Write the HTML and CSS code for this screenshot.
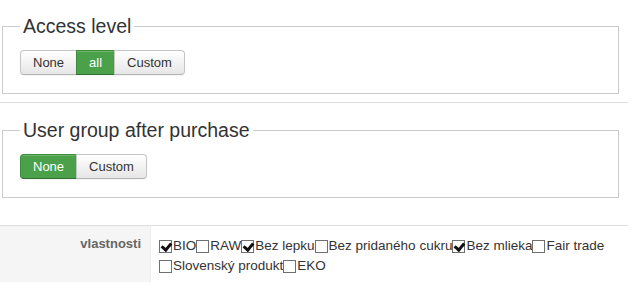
FILE: index.html
```html
<!DOCTYPE html>
<html lang="en">
  <head>
    <meta charset="UTF-8" />
    <title>Product options</title>
    <link rel="stylesheet" href="styles.css">
  </head>
  <body>
    <div class="page">
      <fieldset class="group">
        <legend>Access level</legend>
        <div class="btn-group">
          <button type="button" class="btn">None</button>
          <button type="button" class="btn btn-success">all</button>
          <button type="button" class="btn">Custom</button>
        </div>
      </fieldset>

      <hr class="sep" />

      <fieldset class="group">
        <legend>User group after purchase</legend>
        <div class="btn-group">
          <button type="button" class="btn btn-success">None</button>
          <button type="button" class="btn">Custom</button>
        </div>
      </fieldset>

      <table class="props">
        <tr>
          <th>vlastnosti</th>
          <td>
            <label class="opt"><input type="checkbox" checked />BIO</label><label class="opt"><input type="checkbox" />RAW</label><label class="opt"><input type="checkbox" checked />Bez lepku</label><label class="opt"><input type="checkbox" />Bez pridaného cukru</label><label class="opt"><input type="checkbox" checked />Bez mlieka</label><label class="opt"><input type="checkbox" />Fair trade</label>
            <label class="opt"><input type="checkbox" />Slovenský produkt</label><label class="opt"><input type="checkbox" />EKO</label>
          </td>
        </tr>
      </table>
    </div>
  </body>
</html>
```

FILE: styles.css
```css
body {
  margin: 0;
  font-family: Arial, "Liberation Sans", sans-serif;
  font-size: 13px;
  color: #333;
  background: #fff;
}
.page {
  width: 628px;
  padding-top: 14px;
}
.group {
  margin: 0 9px 0 2px;
  padding: 0 17px 18px;
  border: 1px solid #ccc;
}
.group legend {
  padding: 0 3px;
  font-size: 19.5px;
  line-height: 24px;
  color: #333;
}
.btn-group {
  display: flex;
  margin-top: 12px;
}
.btn {
  font-family: inherit;
  font-size: 13px;
  line-height: 15px;
  color: #333;
  padding: 4px 12px 4px;
  margin: 0 0 0 -1px;
  border: 1px solid #c5c5c5;
  border-bottom-color: #b3b3b3;
  border-radius: 0;
  background: linear-gradient(#ffffff, #e6e6e6);
  box-shadow: inset 0 1px 0 rgba(255, 255, 255, 0.2), 0 1px 2px rgba(0, 0, 0, 0.05);
  cursor: pointer;
}
.btn:first-child {
  margin-left: 0;
  border-radius: 4px 0 0 4px;
}
.btn:last-child {
  border-radius: 0 4px 4px 0;
}
.btn-success {
  color: #fff;
  background: #4aa14a;
  border-color: #3d8b3d;
  border-bottom-color: #2f6f2f;
}
.sep {
  margin: 8px 0 15px;
  border: 0;
  border-top: 1px solid #ddd;
}
.props {
  margin-top: 27px;
  width: 628px;
  border-collapse: collapse;
  border-top: 1px solid #ddd;
}
.props th {
  width: 133px;
  padding: 8px 9px 8px 8px;
  background: #f5f5f5;
  text-align: right;
  vertical-align: top;
  font-weight: bold;
  color: #666;
  line-height: 20px;
  border-right: 1px solid #eee;
}
.props td {
  padding: 10px 0 6px 8px;
  font-size: 13.5px;
  line-height: 20px;
  vertical-align: top;
}
.opt {
  white-space: nowrap;
}
.opt input {
  appearance: none;
  -webkit-appearance: none;
  position: relative;
  width: 13px;
  height: 13px;
  margin: 0 1px 0 0;
  border: 1px solid #707070;
  background: #fff;
  vertical-align: middle;
}
.opt input:checked::after {
  content: "";
  position: absolute;
  left: 3px;
  top: 0px;
  width: 4px;
  height: 7px;
  border: solid #111;
  border-width: 0 3px 3px 0;
  transform: rotate(40deg);
}
```
